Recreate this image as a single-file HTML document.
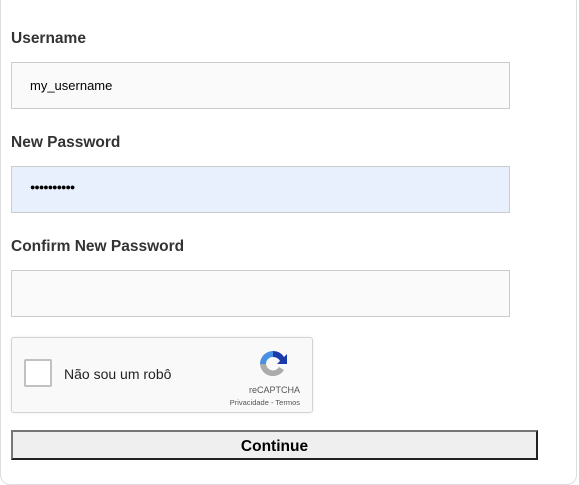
<html><head><style>
body{margin:0;background:#fff;font-family:"Liberation Sans",sans-serif;}
.card{position:absolute;left:0;top:-10px;width:575px;height:493px;border:1px solid #ddd;border-radius:10px;}
.lab{position:absolute;left:11px;font-weight:bold;font-size:15.5px;color:#333;}
.in{position:absolute;left:11px;width:497px;height:45px;border:1px solid #ccc;background:#fafafa;font-size:14px;}
.in span{position:absolute;left:18px;top:15px;}
</style></head><body>
<div class="card"></div>
<div class="lab" style="top:30px">Username</div>
<div class="in" style="top:62px"><span style="font-size:13px">my_username</span></div>
<div class="lab" style="top:134px">New Password</div>
<div class="in" style="top:166px;background:#e8f0fe"><span style="top:15px;font-size:9px;line-height:10px;letter-spacing:-1px;color:#000">●●●●●●●●●●</span></div>
<div class="lab" style="top:238px">Confirm New Password</div>
<div class="in" style="top:270px"></div>
<div style="position:absolute;left:11px;top:337px;width:300px;height:74px;border:1px solid #d3d3d3;border-radius:3px;background:#f9f9f9;box-shadow:0 0 3px rgba(0,0,0,.08)">
<div style="position:absolute;left:12px;top:21px;width:24px;height:24px;border:2px solid #c1c1c1;border-radius:2px;background:#fff"></div>
<div style="position:absolute;left:52px;top:28px;font-size:14px;color:#222">Não sou um robô</div>
<svg style="position:absolute;left:245px;top:10px" width="32" height="32" viewBox="0 0 32 32">
<path d="M16 3a13 13 0 0 1 11 6l3-3v10H20l3-3a8 8 0 0 0-7-4z" fill="#1c3aa9"/>
<path d="M16 3A13 13 0 0 0 3 16h6a7 7 0 0 1 7-7z" fill="#4a90e2"/>
<path d="M3 16a13 13 0 0 0 24 6l-5-3a7 7 0 0 1-13-3z" fill="#ababab"/>
</svg>
<div style="position:absolute;right:12px;top:47px;font-size:9px;color:#555">reCAPTCHA</div>
<div style="position:absolute;right:12px;top:60px;font-size:7.5px;color:#555">Privacidade - Termos</div>
</div>
<div style="position:absolute;left:11px;top:430px;width:523px;height:26px;border:2px solid;border-color:#767676 #222 #222 #767676;background:#efefef;text-align:center;font-weight:bold;font-size:15.5px;line-height:30px;color:#000">Continue</div>
</body></html>
